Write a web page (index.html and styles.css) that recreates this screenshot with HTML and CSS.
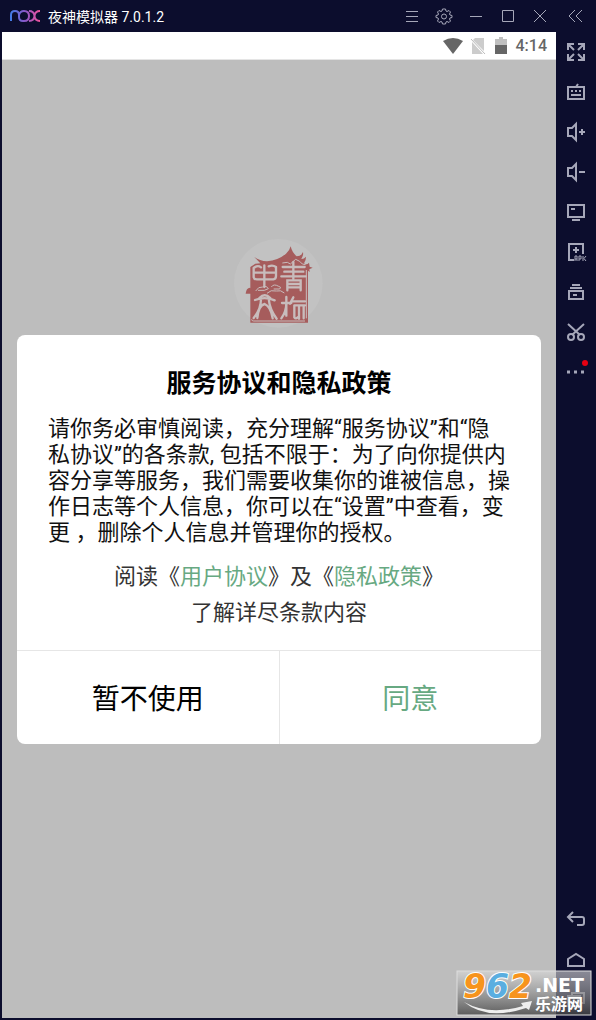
FILE: index.html
```html
<!DOCTYPE html>
<html lang="zh-CN">
<head>
    <meta charset="UTF-8">
    <meta name="viewport" content="width=device-width, initial-scale=1.0">
    <title>夜神模拟器</title>
    <link rel="stylesheet" href="styles.css">
</head>
<body>
<div class="window">
    <header class="titlebar">
        <svg class="nox" viewBox="0 0 30 12" aria-hidden="true">
            <defs>
                <linearGradient id="nox" x1="0" x2="30" y1="0" y2="0" gradientUnits="userSpaceOnUse">
                    <stop offset="0" stop-color="#3f7de8"/>
                    <stop offset=".5" stop-color="#8a58c8"/>
                    <stop offset="1" stop-color="#f0529a"/>
                </linearGradient>
            </defs>
            <g fill="none" stroke="url(#nox)" stroke-width="2">
                <path d="M1 11V5Q1 1 5 1Q9 1 9 5V7Q9 11 13 11H14Q19 11 19 6T14 1Q10 1 9 5"/>
                <path d="M19 1Q24 1 24.500 6T30 11M30 1Q25 1 24.500 6T19 11"/>
            </g>
        </svg>
        <h1>夜神模拟器 7.0.1.2</h1>
        <div class="win-btns">
            <button type="button" aria-label="菜单"><svg viewBox="0 0 20 20"><path d="M4 5.500h12M4 10.500h12M4 15.500h12"/></svg></button>
            <button type="button" aria-label="设置"><svg viewBox="0 0 20 20"><path d="M8.500 3h3l.5 2 1 .5 2-1 1.500 1.500-1 2 .5 1 2 .5v2l-2 .5-.5 1 1 2-1.500 1.500-2-1-1 .5-.5 2h-3l-.5-2-1-.5-2 1L3.500 15l1-2-.5-1-2-.5v-2L4 9l.5-1-1-2L5 4.500l2 1 1-.5z"/><circle cx="10" cy="10.500" r="2.500"/></svg></button>
            <button type="button" aria-label="最小化"><svg viewBox="0 0 20 20"><path d="M4 10.500h12"/></svg></button>
            <button type="button" aria-label="最大化"><svg viewBox="0 0 20 20"><path d="M4.500 4.500h11v11h-11z"/></svg></button>
            <button type="button" aria-label="关闭"><svg viewBox="0 0 20 20"><path d="M4 4l12 12M16 4L4 16"/></svg></button>
            <button type="button" class="fold" aria-label="收起"><svg viewBox="0 0 20 20"><path d="M9 4l-6 6 6 6M16 4l-6 6 6 6"/></svg></button>
        </div>
    </header>

    <main class="phone">
        <div class="status">
            <svg class="wifi" viewBox="0 0 20 16"><path d="M0 3Q10-3 20 3L10 16z"/></svg>
            <svg class="sim" viewBox="0 0 16 16"><path d="M5 0h9v13L3 2zM2 4l11 12H2z"/><path class="slash" d="M1 1l14 15"/></svg>
            <svg class="battery" viewBox="0 0 12 17"><path class="light" d="M4 0h4v2h4v7H0V2h4z"/><path d="M0 8h12v9H0z"/></svg>
            <span>4:14</span>
        </div>
        <div class="screen">
            <svg class="seal" viewBox="-3 0 330 300" aria-hidden="true">
                <circle cx="160" cy="160" r="133" fill="#c2c2c2"/>
                <g fill="#a65c5c">
                    <path d="M88 81Q104 93 126 94Q160 91 183 71Q194 62 197 49Q201 67 215 79Q229 79 234 66Q236 76 229 87Q236 88 243 80Q243 92 237 100Q245 106 252 98L254 110L263 113L253 118L254 126L249 122V278H76V111L91 101L106 100Z"/>
                    <path d="M62 191Q64 172 76 173L90 191Z"/>
                </g>
                <g fill="none" stroke="#c8bcbc" stroke-width="7" stroke-linecap="round">
                    <path d="M86 114V142Q87 148 96 148H145Q153 147 153 138V111M86 114Q98 104 108 112M131 109Q143 104 153 111M118 106V171M88 128H151"/>
                    <path d="M103 204Q119 188 136 204M90 210Q120 198 149 211M108 207Q108 237 86 264M131 206Q134 239 155 266M97 264Q101 225 119 222Q137 229 143 265"/>
                    <path d="M173 111H239M178 125H235M169 139H242M205 96V146M187 181V151H227V181M187 162H227M187 172H227"/>
                    <path d="M184 201V257M171 219H199M184 219Q184 245 169 265M205 202L195 221M202 214H240M208 226V262Q212 268 218 262M208 226H240M222 228V266M236 226V265"/>
                </g>
                <g fill="none" stroke="#c8bcbc" stroke-width="3">
                    <path d="M92 183Q100 169 113 171Q125 166 130 176L118 181H99M139 171Q146 160 161 169Q171 171 164 177H146M126 190Q137 178 154 183Q168 179 178 189M80 268Q80 273 86 273H240M244 120V265"/>
                    <path d="M172 99L187 97L196 102L212 88L224 94L232 102L242 104"/>
                </g>
            </svg>

            <section class="dialog" role="dialog" aria-labelledby="dialog-title">
                <div class="dialog-body">
                    <h2 id="dialog-title">服务协议和隐私政策</h2>
                    <p class="desc">请你务必审慎阅读，充分理解“服务协议”和“隐<br>私协议”的各条款, 包括不限于：为了向你提供内<br>容分享等服务，我们需要收集你的谁被信息，操<br>作日志等个人信息，你可以在“设置”中查看，变<br>更 ，删除个人信息并管理你的授权。</p>
                    <p class="more">阅读《<a href="#">用户协议</a>》及《<a href="#">隐私政策</a>》<br>了解详尽条款内容</p>
                </div>
                <div class="dialog-btns">
                    <button type="button">暂不使用</button>
                    <button type="button" class="agree">同意</button>
                </div>
            </section>
        </div>
    </main>

    <aside class="tools">
        <button type="button" aria-label="全屏"><svg viewBox="0 0 20 20"><path d="M2 8V2h6M2 2l6 6M12 2h6v6M18 2l-6 6M2 12v6h6M2 18l6-6M12 18h6v-6M18 18l-6-6"/></svg></button>
        <button type="button" aria-label="键盘"><svg viewBox="0 0 20 20"><path d="M2 5h16v12H2zM10 5l2-3M5 9h2M9 9h2M13 9h2M5 13h10"/></svg></button>
        <button type="button" aria-label="音量加"><svg viewBox="0 0 20 20"><path d="M2 6h4l4-4v16l-4-4H2zM13 10h6M16 7v6"/></svg></button>
        <button type="button" aria-label="音量减"><svg viewBox="0 0 20 20"><path d="M2 6h4l4-4v16l-4-4H2zM13 10h6"/></svg></button>
        <button type="button" aria-label="显示"><svg viewBox="0 0 20 20"><path d="M2 3h16v12H2zM5 7h4M6 18h8"/></svg></button>
        <button type="button" aria-label="安装APK"><svg viewBox="0 0 20 20"><path d="M8 18H3V2h14v10M10 5v6M7 8h6"/><path class="thin" d="M9 19v-5h2v5M9 17h2M13 19v-5h2v3h-2M17 14v5M20 14l-2 2.500 2 2.500"/></svg></button>
        <button type="button" aria-label="多开"><svg viewBox="0 0 20 20"><path d="M3 9h14v8H3zM4 6h12M6 3h8M7 13h4"/></svg></button>
        <button type="button" aria-label="剪切"><svg viewBox="0 0 20 20"><path d="M2 2l12 11M18 2L6 13"/><circle cx="5" cy="15" r="3"/><circle cx="15" cy="15" r="3"/></svg></button>
        <button type="button" class="dots" aria-label="更多"><svg viewBox="0 0 20 20"><path d="M1 10h3M8 10h3M15 10h3"/></svg></button>
        <button type="button" class="back" aria-label="返回"><svg viewBox="0 0 20 20"><path d="M7 2L2 7l5 5M2 7h14q2 0 2 2v4q0 2-2 2h-5"/></svg></button>
        <button type="button" aria-label="主页"><svg viewBox="0 0 20 20"><path d="M2 9l8-5 8 5v7H2z"/></svg></button>
        <button type="button" aria-label="任务"><svg viewBox="0 0 20 20"><path d="M2 6h12v10H2zM6 6V3h12v10h-4"/></svg></button>
    </aside>

    <svg class="mark" viewBox="0 0 136 46" role="img" aria-label="962.NET 乐游网">
        <defs>
            <linearGradient id="mark" x1="0" y1="0" x2="0" y2="1">
                <stop offset="0" stop-color="#ddd" stop-opacity=".6"/>
                <stop offset="1" stop-color="#444" stop-opacity=".8"/>
            </linearGradient>
        </defs>
        <rect x="1" y="1" width="134" height="44" fill="url(#mark)" stroke="#ddd"/>
        <g class="num">
            <text x="7" y="28" fill="#f7941d">9</text>
            <text x="30" y="28" fill="#5aaee0">6</text>
            <text x="53" y="28" fill="#f7941d">2</text>
        </g>
        <path d="M8 32Q33 46 67 36L65 33L76 31L73 40L70 38Q31 51 8 32z" fill="#eee"/>
        <text class="net" x="79" y="22">.NET</text>
        <text class="cn" x="79" y="40">乐游网</text>
    </svg>
</div>
</body>
</html>
```
FILE: styles.css
```css
*{ margin: 0; padding: 0; box-sizing: border-box; }
body{
    font-family: Roboto, "Noto Sans CJK SC", sans-serif;
    background: #0c0d2d;
}
a{ text-decoration: none; color: #67a982; }
button{
    border: none;
    background: none;
    font-family: inherit;
    cursor: pointer;
}
svg{ display: block; flex: none; }
.window{
    position: relative;
    display: grid;
    grid-template-columns: 1fr 40px;
    grid-template-rows: 32px 1fr;
    min-height: 100vh;
}

/* 标题栏 */
.titlebar{
    grid-column: 1 / 3;
    display: flex;
    align-items: center;
    padding-left: 10px;
}
.titlebar h1{
    flex: 1;
    margin-left: 8px;
    font-size: 14px;
    font-weight: normal;
    color: #fff;
}
.nox{
    width: 30px;
    height: 12px;
}
.win-btns{ display: flex; }
.win-btns button{
    display: flex;
    align-items: center;
    justify-content: center;
    width: 32px;
    height: 32px;
}
.win-btns .fold{ width: 40px; }
.win-btns svg,.tools svg{
    width: 20px;
    height: 20px;
    fill: none;
    stroke: #a6a7b9;
    stroke-width: 1;
}

/* 手机屏幕 */
.phone{
    display: flex;
    flex-direction: column;
    margin: 0 0 2px 2px;
    background: #bdbdbd;
}
.status{
    display: flex;
    align-items: center;
    justify-content: flex-end;
    height: 28px;
    padding-right: 9px;
    border-bottom: 1px solid #e5e5e5;
    background: #fff;
    font-size: 16px;
    font-weight: 500;
    color: #666;
}
.status svg{ fill: #666; }
.status .wifi{ width: 20px; height: 16px; }
.status .sim{ width: 16px; height: 16px; margin-left: 7px; fill: #ccc; }
.status .slash{ stroke: #bbb; stroke-width: 1; }
.status .battery{ width: 12px; height: 17px; margin: 0 9px; }
.status .light{ fill: #c0c0c0; }
.screen{
    flex: 1;
    padding: 170px 15px 0;
}
.seal{
    width: 110px;
    height: 100px;
    margin: 0 auto 5px;
}

/* 弹窗 */
.dialog{
    overflow: hidden;
    border-radius: 8px;
    background: #fff;
}
.dialog-body{ padding: 31px 31px 19px; }
.dialog h2{
    margin-bottom: 14px;
    font-size: 25px;
    font-weight: bold;
    line-height: 36px;
    text-align: center;
    color: #000;
}
.desc{
    margin-bottom: 13px;
    font-size: 22px;
    line-height: 26px;
    color: #111;
    white-space: nowrap;
}
.more{
    font-size: 22px;
    line-height: 36px;
    text-align: center;
    color: #333;
}
.dialog-btns{
    display: flex;
    border-top: 1px solid #e6e6e6;
}
.dialog-btns button{
    flex: 1;
    height: 93px;
    padding-bottom: 2px;
    font-size: 28px;
    color: #000;
}
.dialog-btns .agree{
    border-left: 1px solid #e6e6e6;
    color: #67a982;
}

/* 右侧工具栏 */
.tools{
    display: flex;
    flex-direction: column;
}
.tools button{
    display: flex;
    align-items: center;
    justify-content: center;
    height: 40px;
}
.tools svg{ stroke-width: 2; overflow: visible; }
.tools .thin{ stroke-width: 1; }
.tools .back{ margin-top: auto; }
.tools .dots{ position: relative; }
.tools .dots svg{ stroke-width: 3; }
.tools .dots:after{
    content: "";
    position: absolute;
    top: 8px;
    right: 8px;
    width: 6px;
    height: 6px;
    border-radius: 50%;
    background: #e60012;
}

/* 水印 */
.mark{
    position: absolute;
    right: 4px;
    bottom: 4px;
    width: 136px;
    height: 46px;
    overflow: visible;
    fill: #fff;
}
.mark .num{
    font: italic bold 33px "DejaVu Sans", sans-serif;
    stroke: #fff;
    stroke-width: 2;
    paint-order: stroke;
}
.mark .net{ font: bold 19px "DejaVu Sans", sans-serif; }
.mark .cn{ font: bold 16px "Noto Sans CJK SC", sans-serif; }
```
